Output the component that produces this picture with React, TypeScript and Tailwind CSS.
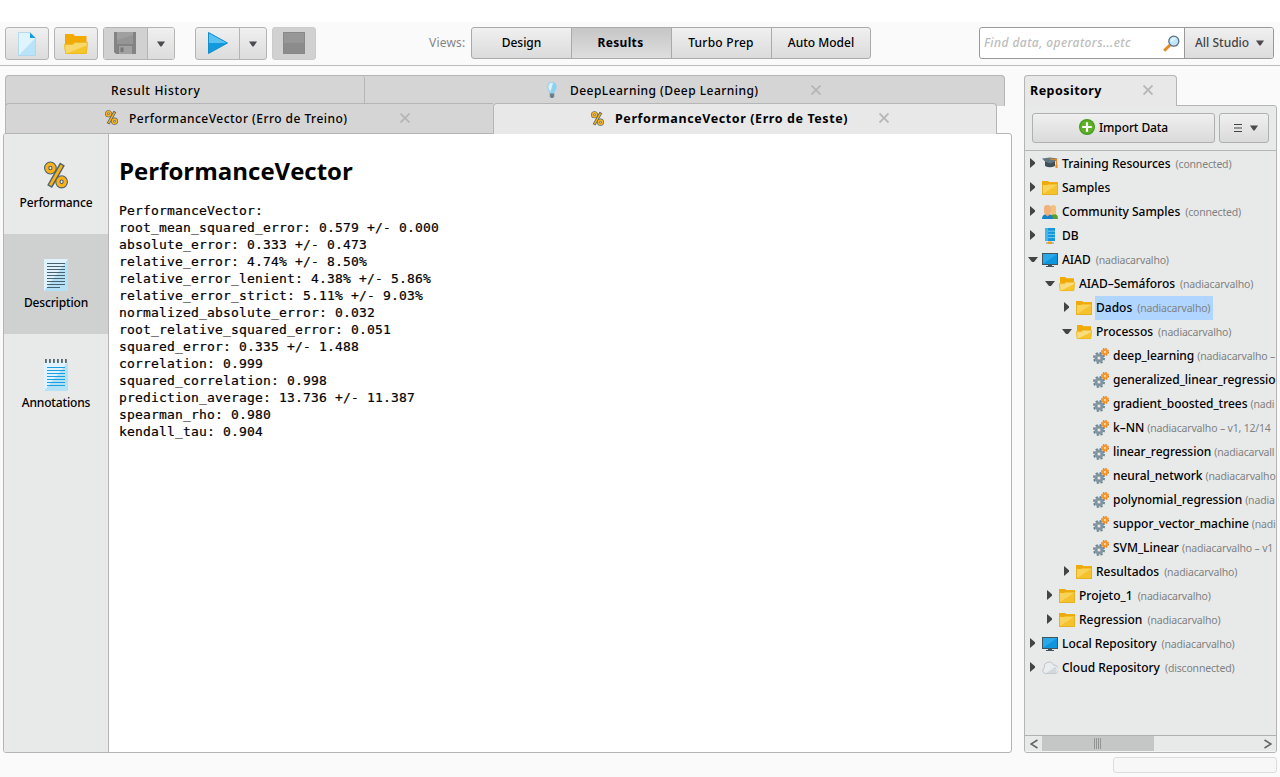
import React from "react";

type IconProps = { className?: string };

function Percent({ className = "" }: IconProps) {
  return (
    <svg viewBox="0 0 24 28" className={className}>
      <g fill="none" stroke="#4d636e">
        <ellipse cx="6.4" cy="7" rx="3.7" ry="3.9" strokeWidth="5.4" />
        <ellipse cx="17.6" cy="20.8" rx="3.7" ry="3.9" strokeWidth="5.4" />
        <path d="M5.6 25.6 L18.4 3" strokeWidth="5.6" />
      </g>
      <g fill="none" stroke="#f9b01a">
        <ellipse cx="6.4" cy="7" rx="3.7" ry="3.9" strokeWidth="3.2" />
        <ellipse cx="17.6" cy="20.8" rx="3.7" ry="3.9" strokeWidth="3.2" />
        <path d="M6.2 24.4 L17.8 4.2" strokeWidth="2.8" />
      </g>
    </svg>
  );
}

function Cross({ className = "" }: IconProps) {
  return (
    <svg viewBox="0 0 10 10" className={"size-[10px] shrink-0 -translate-y-px " + className}>
      <path d="M.5 .5 L9.5 9.5 M9.5 .5 L.5 9.5" stroke="#b6b6b6" strokeWidth="1.8" />
    </svg>
  );
}

function Caret({ className = "" }: IconProps) {
  return (
    <svg viewBox="0 0 8 6" className={"h-[6px] w-[8px] shrink-0 " + className}>
      <path d="M0 .5 H8 L4.6 5.5 H3.4 Z" fill="#4b4b4f" />
    </svg>
  );
}

function NewFile() {
  return (
    <svg viewBox="0 0 18 24" className="h-6 w-[18px]">
      <path d="M.5 .5 H12 L17.5 6 V23.5 H.5 Z" fill="#e0f4fe" />
      <path d="M17.5 6 V23.5 H.5 Z" fill="#b8e3f9" />
      <path d="M.5 .5 H12 L17.5 6 V23.5 H.5 Z" fill="none" stroke="#a9d3e8" strokeWidth=".8" />
      <path d="M12 .5 V6 H17.5 Z" fill="#139bdf" />
    </svg>
  );
}

function BigFolder() {
  return (
    <svg viewBox="0 0 24 20" className="h-5 w-6">
      <path d="M1 0 H9 L11 2 H22.5 V19 H1 Z" fill="#f2a900" />
      <path d="M0 10.5 H8.5 L11 8.5 H24 L22.5 20 H1.5 Z" fill="#f5c52c" />
      <path d="M0 10.5 H8.5 L11 8.5 H24 L23.5 11 L1.5 20 Z" fill="#f8d86b" />
      <path d="M.5 10.5 H8.5 L11 8.5 H23.5 L22.3 19.6 H1.7 Z" fill="none" stroke="#edb51f" strokeWidth=".7" />
    </svg>
  );
}

function Floppy() {
  return (
    <svg viewBox="0 0 22 22" className="size-[22px] -translate-x-px -translate-y-px">
      <path d="M0 0 H22 V22 H2 L0 20 Z" fill="#838383" />
      <path d="M3 0 H19 V12 H3 Z" fill="#a0a0a0" />
      <path d="M3 8 L19 3 V12 H3 Z" fill="#959595" />
      <rect x="5" y="14" width="13" height="8" fill="#a1a1a1" />
      <path d="M6.5 15.5 H9.5 V20 H6.5 Z" fill="#777" />
    </svg>
  );
}

function Play() {
  return (
    <svg viewBox="0 0 20 22" className="h-[22px] w-5 -translate-y-px">
      <path d="M.5 .5 V21.5 L19.5 11 Z" fill="#139ade" />
      <path d="M.5 .5 V11 H19.5 Z" fill="#5bc1f0" />
      <path d="M.5 .5 V21.5 L19.5 11 Z" fill="none" stroke="#148dcb" />
    </svg>
  );
}

function Magnifier() {
  return (
    <svg viewBox="0 0 17 17" className="size-[17px] shrink-0">
      <path d="M1.2 15.8 L7 10" stroke="#e58a1c" strokeWidth="3" />
      <circle cx="10.8" cy="6.2" r="5" fill="#bfe6fb" stroke="#5a7180" strokeWidth="1.3" />
      <path d="M7.6 7.5 A4 4 0 0 1 13.5 3.3 Z" fill="#e4f5fe" />
    </svg>
  );
}

function Bulb() {
  return (
    <svg viewBox="0 0 10 16" className="h-4 w-[10px] shrink-0 -translate-y-px">
      <path d="M5 0 C2 0 .3 2.2 .3 5 C.3 8 2.6 9 2.8 12 H7.2 C7.4 9 9.7 8 9.7 5 C9.7 2.2 8 0 5 0 Z" fill="#8fd0f2" />
      <path d="M5 .8 C2.8 .8 1.3 2.5 1.3 5 C1.3 7 2.8 8.5 3.4 10 L6 .9 Z" fill="#dcf3fd" />
      <path d="M2.8 11.5 H7.2 V14.5 L6 16 H4 L2.8 14.5 Z" fill="#6d7f88" />
    </svg>
  );
}

function PlusBadge() {
  return (
    <svg viewBox="0 0 16 16" className="size-4 shrink-0 -translate-y-px">
      <circle cx="8" cy="8" r="8" fill="#459a1f" />
      <circle cx="8" cy="8" r="6.8" fill="#5fb026" />
      <path d="M8 3.2 V12.8 M3.2 8 H12.8" stroke="#fff" strokeWidth="2.2" />
    </svg>
  );
}

function Sheet({ notes = false }: { notes?: boolean }) {
  const lines = notes ? [8.5, 11.5, 14.5, 17.5, 20.5, 23.5, 26.5] : [4.5, 7.5, 10.5, 13.5, 16.5, 19.5, 22.5, 25.5, 28.5];
  return (
    <svg viewBox="0 0 24 32" className="h-8 w-6">
      <rect y={notes ? 3 : 0} width="24" height={notes ? 29 : 32} fill="#e0f3fc" />
      <path d={notes ? "M24 3 V32 H0 Z" : "M24 0 V32 H0 Z"} fill="#b5e1f7" />
      {notes && <path d="M1 2 H24" stroke="#56666f" strokeWidth="4" strokeDasharray="1.8 2.2" />}
      {lines.map((y, i) => (
        <path key={y} d={`M3 ${y} H${!notes && i === lines.length - 1 ? 16 : 21}`} stroke={notes ? "#1a9fe0" : "#476170"} strokeWidth="1" />
      ))}
    </svg>
  );
}

type Kind = "cap" | "folder" | "open" | "people" | "db" | "monitor" | "cloud" | "gears";

function TreeIcon({ kind }: { kind: Kind }) {
  return (
    <svg viewBox="0 0 16 16" className="size-4 shrink-0">
      {kind === "cap" && (
        <>
          <path d="M3 5 H13 V10 Q8 12.5 3 10 Z" fill="#3f5059" />
          <path d="M0 2.5 L8 1.4 L15.5 2.5 L13 5.5 L8 7.5 L3 5.5 Z" fill="#607784" />
          <path d="M8 3 L14.5 3.5 V11" fill="none" stroke="#ef8a1d" strokeWidth="1.2" />
          <rect x="13.5" y="8.5" width="2" height="3.5" fill="#ef8a1d" />
        </>
      )}
      {kind === "folder" && (
        <>
          <path d="M0 1 H6 L7 2 H16 V15 H0 Z" fill="#f3c22c" />
          <path d="M1 14 L15 5 H1 Z" fill="#f9d258" />
          <path d="M0 1 H6 L7 2.2 H16 V4 H6 L5 5 H0 Z" fill="#eea90c" />
          <path d="M.5 4 V14.5 H15.5 V4" fill="none" stroke="#e6b022" />
        </>
      )}
      {kind === "open" && (
        <>
          <path d="M1 1 H6 L7.5 2.2 H15 V14 H1 Z" fill="#f2a900" />
          <path d="M0 7.5 H5.5 L7 6 H16 L15 15 H1 Z" fill="#f5c52c" />
          <path d="M0 7.5 H5.5 L7 6 H16 L15.6 8 L1 15 Z" fill="#f9dc7d" />
          <path d="M.5 7.7 H5.7 L7.2 6.3 H15.6 L14.8 14.6 H1.2 Z" fill="none" stroke="#edb51f" strokeWidth=".7" />
        </>
      )}
      {kind === "people" && (
        <>
          <path d="M8 15 Q8 10 12 10 Q16 10 16 15 Z" fill="#5d9d2d" />
          <rect x="8.5" y="1" width="5.5" height="9.5" rx="2.6" fill="#f3c27a" />
          <path d="M0 15 Q0 10 5.5 10 Q11 10 11 15 Z" fill="#1880c5" />
          <path d="M3 9 H8 V10.5 L5.5 12.5 L3 10.5 Z" fill="#e9a56c" />
          <rect x="2" y="1" width="7" height="9.5" rx="3" fill="#f0b37e" />
        </>
      )}
      {kind === "db" && (
        <>
          <rect x="3" y="0" width="10" height="13" fill="#1696dc" />
          <path d="M3 3.2 H13 M3 6.4 H13 M3 9.6 H13" stroke="#78cdf5" strokeWidth=".9" />
          <path d="M3 0 H6 V13 H3 Z" fill="#45b4ea" />
          <path d="M4 15 H12" stroke="#7c8c94" />
          <rect x="6" y="13.5" width="4" height="2.5" fill="#e9a11b" />
        </>
      )}
      {kind === "monitor" && (
        <>
          <rect x="0" y="1" width="16" height="12" fill="#3e5560" />
          <rect x="1" y="2" width="14" height="10" fill="#0f95dd" />
          <path d="M1 2 H15 L1 12 Z" fill="#2aa9e8" />
          <path d="M6 13 H10 V14 H12 V15 H4 V14 H6 Z" fill="#3e5560" />
        </>
      )}
      {kind === "cloud" && (
        <>
          <path d="M3.5 13.5 A3 3 0 0 1 2.4 7.8 A4.8 4.8 0 0 1 11.6 5.2 A4.2 4.2 0 0 1 13 13.5 Z" fill="#eaedef" stroke="#b9c0c3" strokeWidth=".9" />
          <path d="M4 13.2 L13.5 6.5 Q16 10 13 13.2 Z" fill="#d2d8db" />
        </>
      )}
      {kind === "gears" && (
        <>
          <circle cx="6" cy="10" r="5.1" fill="none" stroke="#66808f" strokeWidth="1.8" strokeDasharray="2.2 1.8" />
          <circle cx="6" cy="10" r="3.3" fill="#dfe5e8" stroke="#8096a2" strokeWidth="2.6" />
          <circle cx="6" cy="10" r="1.9" fill="#e4e9eb" stroke="#5a7382" strokeWidth=".6" />
          <circle cx="12" cy="4" r="3.2" fill="none" stroke="#dc7d1a" strokeWidth="1.6" strokeDasharray="1.5 1.01" />
          <circle cx="12" cy="4" r="2" fill="#fbe3c4" stroke="#f2962f" strokeWidth="2" />
        </>
      )}
    </svg>
  );
}

type Node = { level: number; state: "closed" | "expanded" | "leaf"; icon: Kind; label: string; note?: string; selected?: boolean };

const nodes: Node[] = [
  { level: 0, state: "closed", icon: "cap", label: "Training Resources", note: "(connected)" },
  { level: 0, state: "closed", icon: "folder", label: "Samples" },
  { level: 0, state: "closed", icon: "people", label: "Community Samples", note: "(connected)" },
  { level: 0, state: "closed", icon: "db", label: "DB" },
  { level: 0, state: "expanded", icon: "monitor", label: "AIAD", note: "(nadiacarvalho)" },
  { level: 1, state: "expanded", icon: "open", label: "AIAD–Semáforos", note: "(nadiacarvalho)" },
  { level: 2, state: "closed", icon: "folder", label: "Dados", note: "(nadiacarvalho)", selected: true },
  { level: 2, state: "expanded", icon: "open", label: "Processos", note: "(nadiacarvalho)" },
  { level: 3, state: "leaf", icon: "gears", label: "deep_learning", note: "(nadiacarvalho –" },
  { level: 3, state: "leaf", icon: "gears", label: "generalized_linear_regressio" },
  { level: 3, state: "leaf", icon: "gears", label: "gradient_boosted_trees", note: "(nadi" },
  { level: 3, state: "leaf", icon: "gears", label: "k–NN", note: "(nadiacarvalho – v1, 12/14" },
  { level: 3, state: "leaf", icon: "gears", label: "linear_regression", note: "(nadiacarvall" },
  { level: 3, state: "leaf", icon: "gears", label: "neural_network", note: "(nadiacarvalho" },
  { level: 3, state: "leaf", icon: "gears", label: "polynomial_regression", note: "(nadia" },
  { level: 3, state: "leaf", icon: "gears", label: "suppor_vector_machine", note: "(nadi" },
  { level: 3, state: "leaf", icon: "gears", label: "SVM_Linear", note: "(nadiacarvalho – v1" },
  { level: 2, state: "closed", icon: "folder", label: "Resultados", note: "(nadiacarvalho)" },
  { level: 1, state: "closed", icon: "folder", label: "Projeto_1", note: "(nadiacarvalho)" },
  { level: 1, state: "closed", icon: "folder", label: "Regression", note: "(nadiacarvalho)" },
  { level: 0, state: "closed", icon: "monitor", label: "Local Repository", note: "(nadiacarvalho)" },
  { level: 0, state: "closed", icon: "cloud", label: "Cloud Repository", note: "(disconnected)" },
];

const indents = ["pl-[3px]", "pl-[20px]", "pl-[37px]", "pl-[54px]"];

function TreeRow({ node }: { node: Node }) {
  return (
    <div className={"flex h-6 items-center whitespace-nowrap " + indents[node.level]}>
      <span className="flex w-[14px] shrink-0">
        {node.state === "closed" && (
          <svg viewBox="0 0 6 10" className="ml-[2px] h-[10px] w-[6px] -translate-y-px"><path d="M0 0 L5 4.3 V5.7 L0 10 Z" fill="#444" /></svg>
        )}
        {node.state === "expanded" && (
          <svg viewBox="0 0 10 5" className="h-[5px] w-[10px] -translate-y-px"><path d="M0 0 H10 L6 5 H4 Z" fill="#444" /></svg>
        )}
      </span>
      <TreeIcon kind={node.icon} />
      <span className={"ml-[3px] flex h-6 items-center pl-px " + (node.selected ? "bg-[#b0d5ff] pr-[3px] " : "") + (node.level === 3 ? "gap-[3px]" : "gap-[5px]")}>
        <span className={"text-[12px] font-medium text-black " + (node.level === 3 ? "tracking-[-0.03px]" : "")}>{node.label}</span>
        {node.note && <span className="pt-px text-[10.5px] tracking-[-0.18px] text-[#808282]">{node.note}</span>}
      </span>
    </div>
  );
}

const report = `PerformanceVector:
root_mean_squared_error: 0.579 +/- 0.000
absolute_error: 0.333 +/- 0.473
relative_error: 4.74% +/- 8.50%
relative_error_lenient: 4.38% +/- 5.86%
relative_error_strict: 5.11% +/- 9.03%
normalized_absolute_error: 0.032
root_relative_squared_error: 0.051
squared_error: 0.335 +/- 1.488
correlation: 0.999
squared_correlation: 0.998
prediction_average: 13.736 +/- 11.387
spearman_rho: 0.980
kendall_tau: 0.904`;

function SideItem({ label, selected, children }: { label: string; selected?: boolean; children: React.ReactNode }) {
  return (
    <div className={"flex h-[100px] flex-col items-center pt-[25px] " + (selected ? "bg-[#cfd1d0]" : "")}>
      <div className="flex h-8 items-center">{children}</div>
      <div className="mt-1 text-[12px] leading-4 font-medium tracking-[-0.15px] text-black">{label}</div>
    </div>
  );
}

function Toolbar() {
  return (
    <header className="flex h-[44px] shrink-0 items-start border-b border-[#bbb] pt-[5px] pr-[6px] pl-[5px]">
      <div className="flex h-[33px] gap-[5px]">
        <div className="flex w-11 items-center justify-center rounded-[3px] border border-[#b4b4b4] bg-linear-to-b from-[#f0f0f0] to-[#dcdcdc]"><NewFile /></div>
        <div className="flex w-11 items-center justify-center rounded-[3px] border border-[#b4b4b4] bg-linear-to-b from-[#f0f0f0] to-[#dcdcdc]"><BigFolder /></div>
        <div className="flex w-[72px] overflow-hidden rounded-[3px] border border-[#b4b4b4]">
          <div className="flex w-11 items-center justify-center border-r border-[#b4b4b4] bg-[#d1d1d1]"><Floppy /></div>
          <div className="flex flex-1 items-center justify-center bg-linear-to-b from-[#f0f0f0] to-[#dcdcdc]"><Caret /></div>
        </div>
      </div>
      <div className="ml-5 flex h-[33px] gap-[5px]">
        <div className="flex w-[72px] overflow-hidden rounded-[3px] border border-[#b4b4b4] bg-linear-to-b from-[#f0f0f0] to-[#dcdcdc]">
          <div className="flex w-11 items-center justify-center border-r border-[#b4b4b4]"><Play /></div>
          <div className="flex flex-1 items-center justify-center"><Caret /></div>
        </div>
        <div className="flex w-11 items-center justify-center rounded-[3px] border border-[#cbcbcb] bg-[#d1d1d1]">
          <div className="size-[22px] -translate-y-px border border-[#898989] bg-linear-to-b from-[#979797] from-50% to-[#8c8c8c] to-50%" />
        </div>
      </div>
      <div className="ml-[113px] flex h-8 items-center text-[12px] text-[#858585]">
        <span className="w-[42px] tracking-[0.2px]">Views:</span>
        <div className="flex h-8 w-[400px] overflow-hidden rounded-[3px] border border-[#aaa] bg-linear-to-b from-[#f0f0f0] to-[#dbdbdb] text-center leading-[30px] font-medium text-black">
          <div className="w-[100px] border-r border-[#aaa]">Design</div>
          <div className="w-[100px] border-r border-[#aaa] bg-linear-to-b from-[#c6c6c6] to-[#dedede] pr-[2px] font-bold tracking-[0.35px]">Results</div>
          <div className="w-[100px] border-r border-[#aaa] pr-px tracking-[0.25px]">Turbo Prep</div>
          <div className="flex-1">Auto Model</div>
        </div>
      </div>
      <div className="ml-auto flex h-8 w-[295px] overflow-hidden rounded-[3px] border border-[#999] bg-white text-[12px]">
        <div className="flex flex-1 items-center justify-between pr-1 pl-[4px]">
          <span className="font-medium tracking-[0.42px] text-[#bcbcbc] italic">Find data, operators...etc</span>
          <Magnifier />
        </div>
        <div className="flex w-[89px] items-center justify-between border-l border-[#999] bg-linear-to-b from-[#f0f0f0] to-[#dcdcdc] pr-[9px] pl-[10px] font-medium text-[#444]">
          All Studio <Caret />
        </div>
      </div>
    </header>
  );
}

function Results() {
  return (
    <main className="flex w-[1009px] shrink-0 flex-col">
      <div className="ml-[2px] flex h-[31px] w-[1000px] rounded-t-[4px] border border-b-0 border-[#b5b5b5] bg-[#d5d5d5] text-[12px] font-medium">
        <div className="h-[28px] w-[359px] rounded-tr-[3px] border-r border-[#b5b5b5] pl-[105px] leading-[29px] tracking-[0.66px]">Result History</div>
        <div className="flex h-[29px] items-center pl-[182px]">
          <Bulb />
          <span className="ml-[13px] w-[241px] tracking-[0.46px]">DeepLearning (Deep Learning)</span>
          <Cross />
        </div>
      </div>
      <div className="relative z-10 -mt-[3px] -mb-px ml-[2px] flex h-[31px] w-[992px] text-[12px]">
        <div className="flex w-[488px] items-center rounded-tl-[4px] border border-r-0 border-[#b5b5b5] bg-[#d5d5d5] pl-[99px] font-medium">
          <Percent className="h-[15px] w-[13px] -translate-y-px" />
          <span className="ml-[11px] w-[271px] tracking-[0.47px]">PerformanceVector (Erro de Treino)</span>
          <Cross />
        </div>
        <div className="flex flex-1 items-center rounded-t-[4px] border border-b-0 border-[#b5b5b5] bg-[#e8e8e8] pl-[97px] font-bold">
          <Percent className="h-[15px] w-[13px] -translate-y-px" />
          <span className="ml-[11px] w-[264px] text-[12.5px] tracking-[0.59px]">PerformanceVector (Erro de Teste)</span>
          <Cross />
        </div>
      </div>
      <section className="flex flex-1 overflow-hidden rounded-[3px] border border-[#b5b5b5] bg-white">
        <nav className="w-[105px] border-r border-[#b5b5b5] bg-[#e8eaea]">
          <SideItem label="Performance"><Percent className="h-7 w-6" /></SideItem>
          <SideItem label="Description" selected><Sheet /></SideItem>
          <SideItem label="Annotations"><Sheet notes /></SideItem>
        </nav>
        <article className="pt-[20px] pl-[10px] text-black">
          <h1 className="font-['Open_Sans'] text-[24px] leading-[34px] font-bold">PerformanceVector</h1>
          <pre className="mt-[14px] font-['DejaVu_Sans_Mono',monospace] text-[13px] leading-[17px] tracking-[0.174px] [-webkit-text-stroke:0.2px_#000]">{report}</pre>
        </article>
      </section>
    </main>
  );
}

function Repository() {
  return (
    <aside className="ml-3 flex w-[253px] shrink-0 flex-col">
      <div className="relative z-10 -mb-px flex h-[31px] w-[153px] items-center rounded-t-[4px] border border-b-0 border-[#b5b5b5] bg-[#e8e8e8] pl-[5px] text-[12.5px] font-bold">
        <span className="w-[113px] tracking-[0.46px]">Repository</span>
        <Cross />
      </div>
      <section className="flex flex-1 flex-col overflow-hidden rounded-[3px] rounded-tl-none border border-[#b5b5b5] bg-[#e8eaea]">
        <div className="flex h-[45px] shrink-0 gap-1 border-b border-[#b5b5b5] pt-[7px] pl-[7px] text-[12px] font-medium">
          <div className="flex h-[30px] w-[183px] items-center justify-center gap-1 rounded-[3px] border border-[#b0b0b0] bg-linear-to-b from-[#f0f0f0] to-[#dadada] tracking-[-0.1px]">
            <PlusBadge />Import Data
          </div>
          <div className="flex h-[30px] w-[50px] items-center justify-center gap-2 rounded-[3px] border border-[#b0b0b0] bg-linear-to-b from-[#f0f0f0] to-[#dadada]">
            <svg viewBox="0 0 8 8" className="size-2 translate-x-[2px]"><path d="M0 .5 H8 M0 4 H8 M0 7.5 H8" stroke="#444" /></svg>
            <Caret className="translate-x-[2px]" />
          </div>
        </div>
        <div className="flex-1 overflow-hidden pt-px">
          {nodes.map((n) => <TreeRow key={n.label} node={n} />)}
        </div>
        <div className="flex h-[17px] shrink-0 items-start border-t border-[#b0b0b0] bg-[#f4f4f4]">
          <div className="flex h-[15px] w-[17px] items-center justify-center bg-[#e8eaea]">
            <svg viewBox="0 0 8 10" className="h-[10px] w-2"><path d="M7.5 1 L1 5 L7.5 9" fill="none" stroke="#666" strokeWidth="1.6" /></svg>
          </div>
          <div className="flex h-[15px] w-[112px] items-center justify-center bg-[#c5c7c6]">
            <svg viewBox="0 0 8 11" className="h-[11px] w-2"><path d="M.5 0 V11 M2.5 0 V11 M4.5 0 V11 M6.5 0 V11" stroke="#939594" /></svg>
          </div>
          <div className="flex h-[15px] flex-1 items-center justify-end bg-[#e8eaea] pr-1">
            <svg viewBox="0 0 8 10" className="h-[10px] w-2"><path d="M.5 1 L7 5 L.5 9" fill="none" stroke="#666" strokeWidth="1.6" /></svg>
          </div>
        </div>
      </section>
    </aside>
  );
}

export default function App() {
  return (
    <div className="flex h-[777px] w-[1280px] flex-col overflow-hidden bg-[#fafafa] font-['Noto_Sans',sans-serif] text-black">
      <div className="h-[22px] shrink-0 bg-white" />
      <Toolbar />
      <div className="flex h-[687px] shrink-0 pt-[9px] pl-[3px]">
        <Results />
        <Repository />
      </div>
      <footer className="flex justify-end pt-1 pr-[3px]">
        <div className="h-4 w-[164px] rounded-[3px] border border-[#dcdcdc] bg-[#f7f7f7]" />
      </footer>
    </div>
  );
}
